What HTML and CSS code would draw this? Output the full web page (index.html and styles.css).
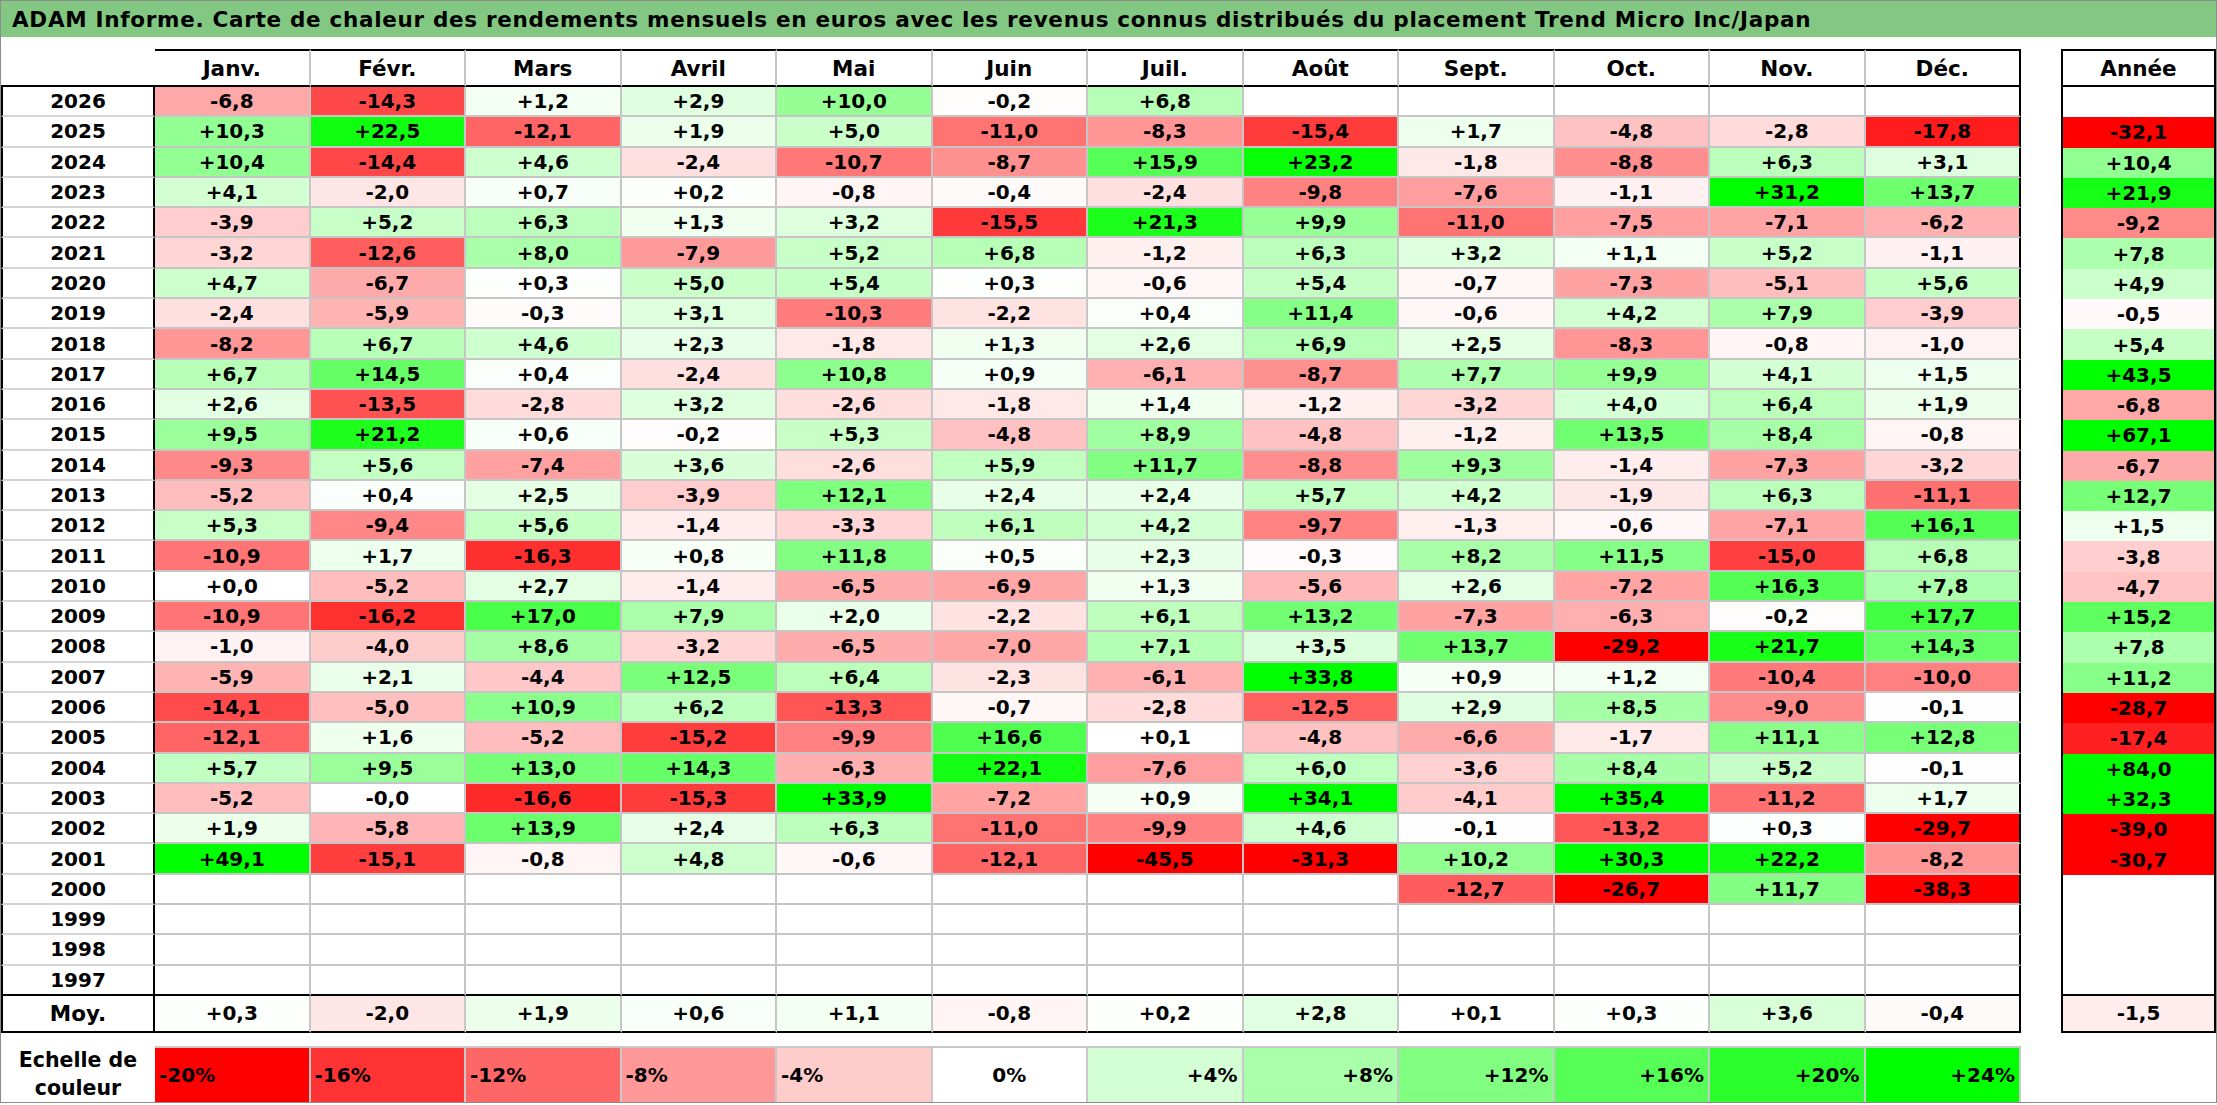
FILE: index.html
```html
<!DOCTYPE html>
<html lang="fr">
<head>
<meta charset="utf-8">
<title>ADAM Informe - Trend Micro Inc/Japan</title>
<link rel="stylesheet" href="styles.css">
<script src="script.js" defer></script>
</head>
<body>
<div class="page">
  <div class="title">ADAM Informe. Carte de chaleur des rendements mensuels en euros avec les revenus connus distribués du placement Trend Micro Inc/Japan</div>
  <div class="sheet">
    <div class="row head"><div class="lab"></div><div class="c">Janv.</div><div class="c">Févr.</div><div class="c">Mars</div><div class="c">Avril</div><div class="c">Mai</div><div class="c">Juin</div><div class="c">Juil.</div><div class="c">Août</div><div class="c">Sept.</div><div class="c">Oct.</div><div class="c">Nov.</div><div class="c">Déc.</div><div class="gap"></div><div class="yr">Année</div></div>
    <div class="row"><div class="lab">2026</div><div class="c v">-6,8</div><div class="c v">-14,3</div><div class="c v">+1,2</div><div class="c v">+2,9</div><div class="c v">+10,0</div><div class="c v">-0,2</div><div class="c v">+6,8</div><div class="c"></div><div class="c"></div><div class="c"></div><div class="c"></div><div class="c"></div><div class="gap"></div><div class="yr"></div></div>
    <div class="row"><div class="lab">2025</div><div class="c v">+10,3</div><div class="c v">+22,5</div><div class="c v">-12,1</div><div class="c v">+1,9</div><div class="c v">+5,0</div><div class="c v">-11,0</div><div class="c v">-8,3</div><div class="c v">-15,4</div><div class="c v">+1,7</div><div class="c v">-4,8</div><div class="c v">-2,8</div><div class="c v">-17,8</div><div class="gap"></div><div class="yr v">-32,1</div></div>
    <div class="row"><div class="lab">2024</div><div class="c v">+10,4</div><div class="c v">-14,4</div><div class="c v">+4,6</div><div class="c v">-2,4</div><div class="c v">-10,7</div><div class="c v">-8,7</div><div class="c v">+15,9</div><div class="c v">+23,2</div><div class="c v">-1,8</div><div class="c v">-8,8</div><div class="c v">+6,3</div><div class="c v">+3,1</div><div class="gap"></div><div class="yr v">+10,4</div></div>
    <div class="row"><div class="lab">2023</div><div class="c v">+4,1</div><div class="c v">-2,0</div><div class="c v">+0,7</div><div class="c v">+0,2</div><div class="c v">-0,8</div><div class="c v">-0,4</div><div class="c v">-2,4</div><div class="c v">-9,8</div><div class="c v">-7,6</div><div class="c v">-1,1</div><div class="c v">+31,2</div><div class="c v">+13,7</div><div class="gap"></div><div class="yr v">+21,9</div></div>
    <div class="row"><div class="lab">2022</div><div class="c v">-3,9</div><div class="c v">+5,2</div><div class="c v">+6,3</div><div class="c v">+1,3</div><div class="c v">+3,2</div><div class="c v">-15,5</div><div class="c v">+21,3</div><div class="c v">+9,9</div><div class="c v">-11,0</div><div class="c v">-7,5</div><div class="c v">-7,1</div><div class="c v">-6,2</div><div class="gap"></div><div class="yr v">-9,2</div></div>
    <div class="row"><div class="lab">2021</div><div class="c v">-3,2</div><div class="c v">-12,6</div><div class="c v">+8,0</div><div class="c v">-7,9</div><div class="c v">+5,2</div><div class="c v">+6,8</div><div class="c v">-1,2</div><div class="c v">+6,3</div><div class="c v">+3,2</div><div class="c v">+1,1</div><div class="c v">+5,2</div><div class="c v">-1,1</div><div class="gap"></div><div class="yr v">+7,8</div></div>
    <div class="row"><div class="lab">2020</div><div class="c v">+4,7</div><div class="c v">-6,7</div><div class="c v">+0,3</div><div class="c v">+5,0</div><div class="c v">+5,4</div><div class="c v">+0,3</div><div class="c v">-0,6</div><div class="c v">+5,4</div><div class="c v">-0,7</div><div class="c v">-7,3</div><div class="c v">-5,1</div><div class="c v">+5,6</div><div class="gap"></div><div class="yr v">+4,9</div></div>
    <div class="row"><div class="lab">2019</div><div class="c v">-2,4</div><div class="c v">-5,9</div><div class="c v">-0,3</div><div class="c v">+3,1</div><div class="c v">-10,3</div><div class="c v">-2,2</div><div class="c v">+0,4</div><div class="c v">+11,4</div><div class="c v">-0,6</div><div class="c v">+4,2</div><div class="c v">+7,9</div><div class="c v">-3,9</div><div class="gap"></div><div class="yr v">-0,5</div></div>
    <div class="row"><div class="lab">2018</div><div class="c v">-8,2</div><div class="c v">+6,7</div><div class="c v">+4,6</div><div class="c v">+2,3</div><div class="c v">-1,8</div><div class="c v">+1,3</div><div class="c v">+2,6</div><div class="c v">+6,9</div><div class="c v">+2,5</div><div class="c v">-8,3</div><div class="c v">-0,8</div><div class="c v">-1,0</div><div class="gap"></div><div class="yr v">+5,4</div></div>
    <div class="row"><div class="lab">2017</div><div class="c v">+6,7</div><div class="c v">+14,5</div><div class="c v">+0,4</div><div class="c v">-2,4</div><div class="c v">+10,8</div><div class="c v">+0,9</div><div class="c v">-6,1</div><div class="c v">-8,7</div><div class="c v">+7,7</div><div class="c v">+9,9</div><div class="c v">+4,1</div><div class="c v">+1,5</div><div class="gap"></div><div class="yr v">+43,5</div></div>
    <div class="row"><div class="lab">2016</div><div class="c v">+2,6</div><div class="c v">-13,5</div><div class="c v">-2,8</div><div class="c v">+3,2</div><div class="c v">-2,6</div><div class="c v">-1,8</div><div class="c v">+1,4</div><div class="c v">-1,2</div><div class="c v">-3,2</div><div class="c v">+4,0</div><div class="c v">+6,4</div><div class="c v">+1,9</div><div class="gap"></div><div class="yr v">-6,8</div></div>
    <div class="row"><div class="lab">2015</div><div class="c v">+9,5</div><div class="c v">+21,2</div><div class="c v">+0,6</div><div class="c v">-0,2</div><div class="c v">+5,3</div><div class="c v">-4,8</div><div class="c v">+8,9</div><div class="c v">-4,8</div><div class="c v">-1,2</div><div class="c v">+13,5</div><div class="c v">+8,4</div><div class="c v">-0,8</div><div class="gap"></div><div class="yr v">+67,1</div></div>
    <div class="row"><div class="lab">2014</div><div class="c v">-9,3</div><div class="c v">+5,6</div><div class="c v">-7,4</div><div class="c v">+3,6</div><div class="c v">-2,6</div><div class="c v">+5,9</div><div class="c v">+11,7</div><div class="c v">-8,8</div><div class="c v">+9,3</div><div class="c v">-1,4</div><div class="c v">-7,3</div><div class="c v">-3,2</div><div class="gap"></div><div class="yr v">-6,7</div></div>
    <div class="row"><div class="lab">2013</div><div class="c v">-5,2</div><div class="c v">+0,4</div><div class="c v">+2,5</div><div class="c v">-3,9</div><div class="c v">+12,1</div><div class="c v">+2,4</div><div class="c v">+2,4</div><div class="c v">+5,7</div><div class="c v">+4,2</div><div class="c v">-1,9</div><div class="c v">+6,3</div><div class="c v">-11,1</div><div class="gap"></div><div class="yr v">+12,7</div></div>
    <div class="row"><div class="lab">2012</div><div class="c v">+5,3</div><div class="c v">-9,4</div><div class="c v">+5,6</div><div class="c v">-1,4</div><div class="c v">-3,3</div><div class="c v">+6,1</div><div class="c v">+4,2</div><div class="c v">-9,7</div><div class="c v">-1,3</div><div class="c v">-0,6</div><div class="c v">-7,1</div><div class="c v">+16,1</div><div class="gap"></div><div class="yr v">+1,5</div></div>
    <div class="row"><div class="lab">2011</div><div class="c v">-10,9</div><div class="c v">+1,7</div><div class="c v">-16,3</div><div class="c v">+0,8</div><div class="c v">+11,8</div><div class="c v">+0,5</div><div class="c v">+2,3</div><div class="c v">-0,3</div><div class="c v">+8,2</div><div class="c v">+11,5</div><div class="c v">-15,0</div><div class="c v">+6,8</div><div class="gap"></div><div class="yr v">-3,8</div></div>
    <div class="row"><div class="lab">2010</div><div class="c v">+0,0</div><div class="c v">-5,2</div><div class="c v">+2,7</div><div class="c v">-1,4</div><div class="c v">-6,5</div><div class="c v">-6,9</div><div class="c v">+1,3</div><div class="c v">-5,6</div><div class="c v">+2,6</div><div class="c v">-7,2</div><div class="c v">+16,3</div><div class="c v">+7,8</div><div class="gap"></div><div class="yr v">-4,7</div></div>
    <div class="row"><div class="lab">2009</div><div class="c v">-10,9</div><div class="c v">-16,2</div><div class="c v">+17,0</div><div class="c v">+7,9</div><div class="c v">+2,0</div><div class="c v">-2,2</div><div class="c v">+6,1</div><div class="c v">+13,2</div><div class="c v">-7,3</div><div class="c v">-6,3</div><div class="c v">-0,2</div><div class="c v">+17,7</div><div class="gap"></div><div class="yr v">+15,2</div></div>
    <div class="row"><div class="lab">2008</div><div class="c v">-1,0</div><div class="c v">-4,0</div><div class="c v">+8,6</div><div class="c v">-3,2</div><div class="c v">-6,5</div><div class="c v">-7,0</div><div class="c v">+7,1</div><div class="c v">+3,5</div><div class="c v">+13,7</div><div class="c v">-29,2</div><div class="c v">+21,7</div><div class="c v">+14,3</div><div class="gap"></div><div class="yr v">+7,8</div></div>
    <div class="row"><div class="lab">2007</div><div class="c v">-5,9</div><div class="c v">+2,1</div><div class="c v">-4,4</div><div class="c v">+12,5</div><div class="c v">+6,4</div><div class="c v">-2,3</div><div class="c v">-6,1</div><div class="c v">+33,8</div><div class="c v">+0,9</div><div class="c v">+1,2</div><div class="c v">-10,4</div><div class="c v">-10,0</div><div class="gap"></div><div class="yr v">+11,2</div></div>
    <div class="row"><div class="lab">2006</div><div class="c v">-14,1</div><div class="c v">-5,0</div><div class="c v">+10,9</div><div class="c v">+6,2</div><div class="c v">-13,3</div><div class="c v">-0,7</div><div class="c v">-2,8</div><div class="c v">-12,5</div><div class="c v">+2,9</div><div class="c v">+8,5</div><div class="c v">-9,0</div><div class="c v">-0,1</div><div class="gap"></div><div class="yr v">-28,7</div></div>
    <div class="row"><div class="lab">2005</div><div class="c v">-12,1</div><div class="c v">+1,6</div><div class="c v">-5,2</div><div class="c v">-15,2</div><div class="c v">-9,9</div><div class="c v">+16,6</div><div class="c v">+0,1</div><div class="c v">-4,8</div><div class="c v">-6,6</div><div class="c v">-1,7</div><div class="c v">+11,1</div><div class="c v">+12,8</div><div class="gap"></div><div class="yr v">-17,4</div></div>
    <div class="row"><div class="lab">2004</div><div class="c v">+5,7</div><div class="c v">+9,5</div><div class="c v">+13,0</div><div class="c v">+14,3</div><div class="c v">-6,3</div><div class="c v">+22,1</div><div class="c v">-7,6</div><div class="c v">+6,0</div><div class="c v">-3,6</div><div class="c v">+8,4</div><div class="c v">+5,2</div><div class="c v">-0,1</div><div class="gap"></div><div class="yr v">+84,0</div></div>
    <div class="row"><div class="lab">2003</div><div class="c v">-5,2</div><div class="c v">-0,0</div><div class="c v">-16,6</div><div class="c v">-15,3</div><div class="c v">+33,9</div><div class="c v">-7,2</div><div class="c v">+0,9</div><div class="c v">+34,1</div><div class="c v">-4,1</div><div class="c v">+35,4</div><div class="c v">-11,2</div><div class="c v">+1,7</div><div class="gap"></div><div class="yr v">+32,3</div></div>
    <div class="row"><div class="lab">2002</div><div class="c v">+1,9</div><div class="c v">-5,8</div><div class="c v">+13,9</div><div class="c v">+2,4</div><div class="c v">+6,3</div><div class="c v">-11,0</div><div class="c v">-9,9</div><div class="c v">+4,6</div><div class="c v">-0,1</div><div class="c v">-13,2</div><div class="c v">+0,3</div><div class="c v">-29,7</div><div class="gap"></div><div class="yr v">-39,0</div></div>
    <div class="row"><div class="lab">2001</div><div class="c v">+49,1</div><div class="c v">-15,1</div><div class="c v">-0,8</div><div class="c v">+4,8</div><div class="c v">-0,6</div><div class="c v">-12,1</div><div class="c v">-45,5</div><div class="c v">-31,3</div><div class="c v">+10,2</div><div class="c v">+30,3</div><div class="c v">+22,2</div><div class="c v">-8,2</div><div class="gap"></div><div class="yr v">-30,7</div></div>
    <div class="row"><div class="lab">2000</div><div class="c"></div><div class="c"></div><div class="c"></div><div class="c"></div><div class="c"></div><div class="c"></div><div class="c"></div><div class="c"></div><div class="c v">-12,7</div><div class="c v">-26,7</div><div class="c v">+11,7</div><div class="c v">-38,3</div><div class="gap"></div><div class="yr"></div></div>
    <div class="row"><div class="lab">1999</div><div class="c"></div><div class="c"></div><div class="c"></div><div class="c"></div><div class="c"></div><div class="c"></div><div class="c"></div><div class="c"></div><div class="c"></div><div class="c"></div><div class="c"></div><div class="c"></div><div class="gap"></div><div class="yr"></div></div>
    <div class="row"><div class="lab">1998</div><div class="c"></div><div class="c"></div><div class="c"></div><div class="c"></div><div class="c"></div><div class="c"></div><div class="c"></div><div class="c"></div><div class="c"></div><div class="c"></div><div class="c"></div><div class="c"></div><div class="gap"></div><div class="yr"></div></div>
    <div class="row last"><div class="lab">1997</div><div class="c"></div><div class="c"></div><div class="c"></div><div class="c"></div><div class="c"></div><div class="c"></div><div class="c"></div><div class="c"></div><div class="c"></div><div class="c"></div><div class="c"></div><div class="c"></div><div class="gap"></div><div class="yr"></div></div>
    <div class="row moy"><div class="lab">Moy.</div><div class="c v">+0,3</div><div class="c v">-2,0</div><div class="c v">+1,9</div><div class="c v">+0,6</div><div class="c v">+1,1</div><div class="c v">-0,8</div><div class="c v">+0,2</div><div class="c v">+2,8</div><div class="c v">+0,1</div><div class="c v">+0,3</div><div class="c v">+3,6</div><div class="c v">-0,4</div><div class="gap"></div><div class="yr v">-1,5</div></div>
    <div class="legend">
      <div class="legend-label">Echelle de<br>couleur</div>
      <div class="lg neg s1">-20%</div>
      <div class="lg neg s2">-16%</div>
      <div class="lg neg s3">-12%</div>
      <div class="lg neg s4">-8%</div>
      <div class="lg neg s5">-4%</div>
      <div class="lg zero s6">0%</div>
      <div class="lg pos s7">+4%</div>
      <div class="lg pos s8">+8%</div>
      <div class="lg pos s9">+12%</div>
      <div class="lg pos s10">+16%</div>
      <div class="lg pos s11">+20%</div>
      <div class="lg pos s12">+24%</div>
    </div>
  </div>
</div>
</body>
</html>
```

FILE: styles.css
```css
* { box-sizing: border-box; }

body {
  margin: 0;
  background: #ffffff;
}

.page {
  width: 2217px;
  border: 1px solid #8c8c8c;
  background: #ffffff;
  color: #000000;
  font-family: "DejaVu Sans", Verdana, sans-serif;
  font-weight: 700;
  font-size: 20px;
}

.title {
  height: 36px;
  background: #82c882;
  display: flex;
  align-items: center;
  padding-left: 11px;
  white-space: nowrap;
  font-size: 21.5px;
  letter-spacing: 0.7px;
}

.sheet {
  margin-top: 12px;
}

.row,
.legend {
  display: grid;
  grid-template-columns: 154px repeat(12, 155.5px) 40px 155px;
}

.row {
  height: 30.3px;
}

.row > div {
  display: flex;
  align-items: center;
  justify-content: center;
  white-space: nowrap;
}

.lab {
  border-left: 2px solid #000000;
  border-right: 2px solid #000000;
  border-bottom: 2px solid #d4d4d4;
}

.c {
  border-right: 2px solid #c6c6c6;
  border-bottom: 2px solid #c6c6c6;
}

.row > .c:nth-child(13) {
  border-right-color: #000000;
}

.yr {
  border-left: 2px solid #000000;
  border-right: 2px solid #000000;
}

.head {
  height: 38px;
  font-size: 21.5px;
}

.head .lab {
  border: 0;
  border-bottom: 2px solid #000000;
}

.head .c {
  border-top: 2px solid #000000;
  border-bottom-color: #000000;
}

.head .yr {
  border-top: 2px solid #000000;
  border-bottom: 2px solid #000000;
}

.last .lab,
.last .c,
.last .yr,
.moy .lab,
.moy .c,
.moy .yr {
  border-bottom: 2px solid #000000;
}

.moy {
  height: 37px;
}

.moy .lab {
  font-size: 21.5px;
}

.legend {
  margin-top: 13px;
  height: 56px;
}

.legend-label {
  grid-column: 1;
  text-align: center;
  line-height: 28px;
  font-size: 20.5px;
  display: flex;
  align-items: center;
  justify-content: center;
}

.lg {
  display: flex;
  align-items: center;
  border-top: 2px solid #c8c8c8;
  border-right: 2px solid #c8c8c8;
}

.lg.neg { justify-content: flex-start; padding-left: 4px; }
.lg.zero { justify-content: center; }
.lg.pos { justify-content: flex-end; padding-right: 4px; }

.s1 { background: #ff0000; }
.s2 { background: #ff3333; }
.s3 { background: #ff6666; }
.s4 { background: #ff9999; }
.s5 { background: #ffcccc; }
.s6 { background: #ffffff; }
.s7 { background: #d4ffd4; }
.s8 { background: #aaffaa; }
.s9 { background: #80ff80; }
.s10 { background: #55ff55; }
.s11 { background: #2bff2b; }
.s12 { background: #00ff00; }
```

FILE: script.js
```js
document.addEventListener('DOMContentLoaded', function () {
  var cells = document.querySelectorAll('.v');
  cells.forEach(function (el) {
    var n = parseFloat(el.textContent.replace(',', '.'));
    if (isNaN(n)) return;
    var k;
    if (n < 0) {
      k = Math.round(255 * (1 - Math.min(1, -n / 20)));
      el.style.backgroundColor = 'rgb(255,' + k + ',' + k + ')';
    } else {
      k = Math.round(255 * (1 - Math.min(1, n / 24)));
      el.style.backgroundColor = 'rgb(' + k + ',255,' + k + ')';
    }
  });
});
```
